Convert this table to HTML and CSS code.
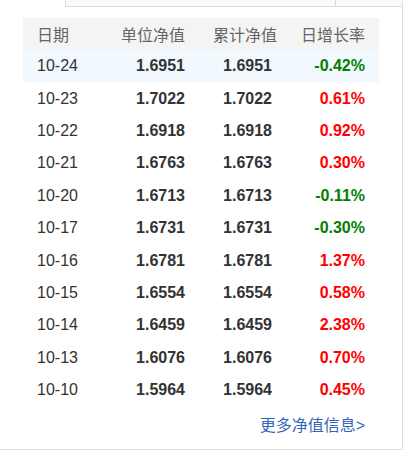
FILE: index.html
```html
<!DOCTYPE html>
<html lang="zh-CN">
<head>
<meta charset="utf-8">
<title>净值</title>
<link rel="stylesheet" href="styles.css">
</head>
<body>
<div class="panel">
  <div class="tabs">
    <div class="tab tab-first"></div>
    <div class="tab"></div>
  </div>
  <div class="table">
    <div class="row head">
      <div class="c c1">日期</div>
      <div class="c c2">单位净值</div>
      <div class="c c3">累计净值</div>
      <div class="c c4">日增长率</div>
    </div>
    <div class="row hl">
      <div class="c c1">10-24</div><div class="c c2 b">1.6951</div><div class="c c3 b">1.6951</div><div class="c c4 b down">-0.42%</div>
    </div>
    <div class="row">
      <div class="c c1">10-23</div><div class="c c2 b">1.7022</div><div class="c c3 b">1.7022</div><div class="c c4 b up">0.61%</div>
    </div>
    <div class="row">
      <div class="c c1">10-22</div><div class="c c2 b">1.6918</div><div class="c c3 b">1.6918</div><div class="c c4 b up">0.92%</div>
    </div>
    <div class="row">
      <div class="c c1">10-21</div><div class="c c2 b">1.6763</div><div class="c c3 b">1.6763</div><div class="c c4 b up">0.30%</div>
    </div>
    <div class="row">
      <div class="c c1">10-20</div><div class="c c2 b">1.6713</div><div class="c c3 b">1.6713</div><div class="c c4 b down">-0.11%</div>
    </div>
    <div class="row">
      <div class="c c1">10-17</div><div class="c c2 b">1.6731</div><div class="c c3 b">1.6731</div><div class="c c4 b down">-0.30%</div>
    </div>
    <div class="row">
      <div class="c c1">10-16</div><div class="c c2 b">1.6781</div><div class="c c3 b">1.6781</div><div class="c c4 b up">1.37%</div>
    </div>
    <div class="row">
      <div class="c c1">10-15</div><div class="c c2 b">1.6554</div><div class="c c3 b">1.6554</div><div class="c c4 b up">0.58%</div>
    </div>
    <div class="row">
      <div class="c c1">10-14</div><div class="c c2 b">1.6459</div><div class="c c3 b">1.6459</div><div class="c c4 b up">2.38%</div>
    </div>
    <div class="row">
      <div class="c c1">10-13</div><div class="c c2 b">1.6076</div><div class="c c3 b">1.6076</div><div class="c c4 b up">0.70%</div>
    </div>
    <div class="row">
      <div class="c c1">10-10</div><div class="c c2 b">1.5964</div><div class="c c3 b">1.5964</div><div class="c c4 b up">0.45%</div>
    </div>
  </div>
  <div class="more"><a href="#">更多净值信息&gt;</a></div>
</div>
</body>
</html>
```

FILE: styles.css
```css
html, body {
  margin: 0;
  padding: 0;
  background: #fff;
}
body {
  font-family: "Liberation Sans", Arial, "Noto Sans CJK SC", sans-serif;
  font-size: 16px;
  color: #333;
}
.panel {
  width: 402px;
  height: 449px;
  border-right: 1px solid #e0e0e0;
  border-bottom: 1px solid #e0e0e0;
  display: flex;
  flex-direction: column;
}
.tabs {
  margin-left: 65px;
  height: 6px;
  display: flex;
  border-left: 1px solid #dcdcdc;
  border-bottom: 1px solid #dcdcdc;
  background: #fafafa;
}
.tab { flex: 1; }
.tab-first {
  flex: 0 0 269px;
  border-right: 1px solid #dcdcdc;
}
.table {
  margin: 11px 0 0 23px;
  width: 356px;
  display: flex;
  flex-direction: column;
}
.row {
  display: grid;
  grid-template-columns: 76px 100px 87px 93px;
  height: 32.4px;
  align-items: center;
}
.row.head {
  height: 32px;
  background: #f4f4f4;
  color: #666;
}
.row.hl { background: #f1f8fe; }
.c {
  padding: 0 14px;
  white-space: nowrap;
}
.c1 { text-align: left; }
.c2, .c3, .c4 { text-align: right; }
.b { font-weight: bold; }
.up { color: #ff0000; }
.down { color: #008000; }
.more {
  margin: 10px 37px 0 0;
  text-align: right;
  line-height: 20px;
}
.more a {
  color: #3366bb;
  text-decoration: none;
}
```
